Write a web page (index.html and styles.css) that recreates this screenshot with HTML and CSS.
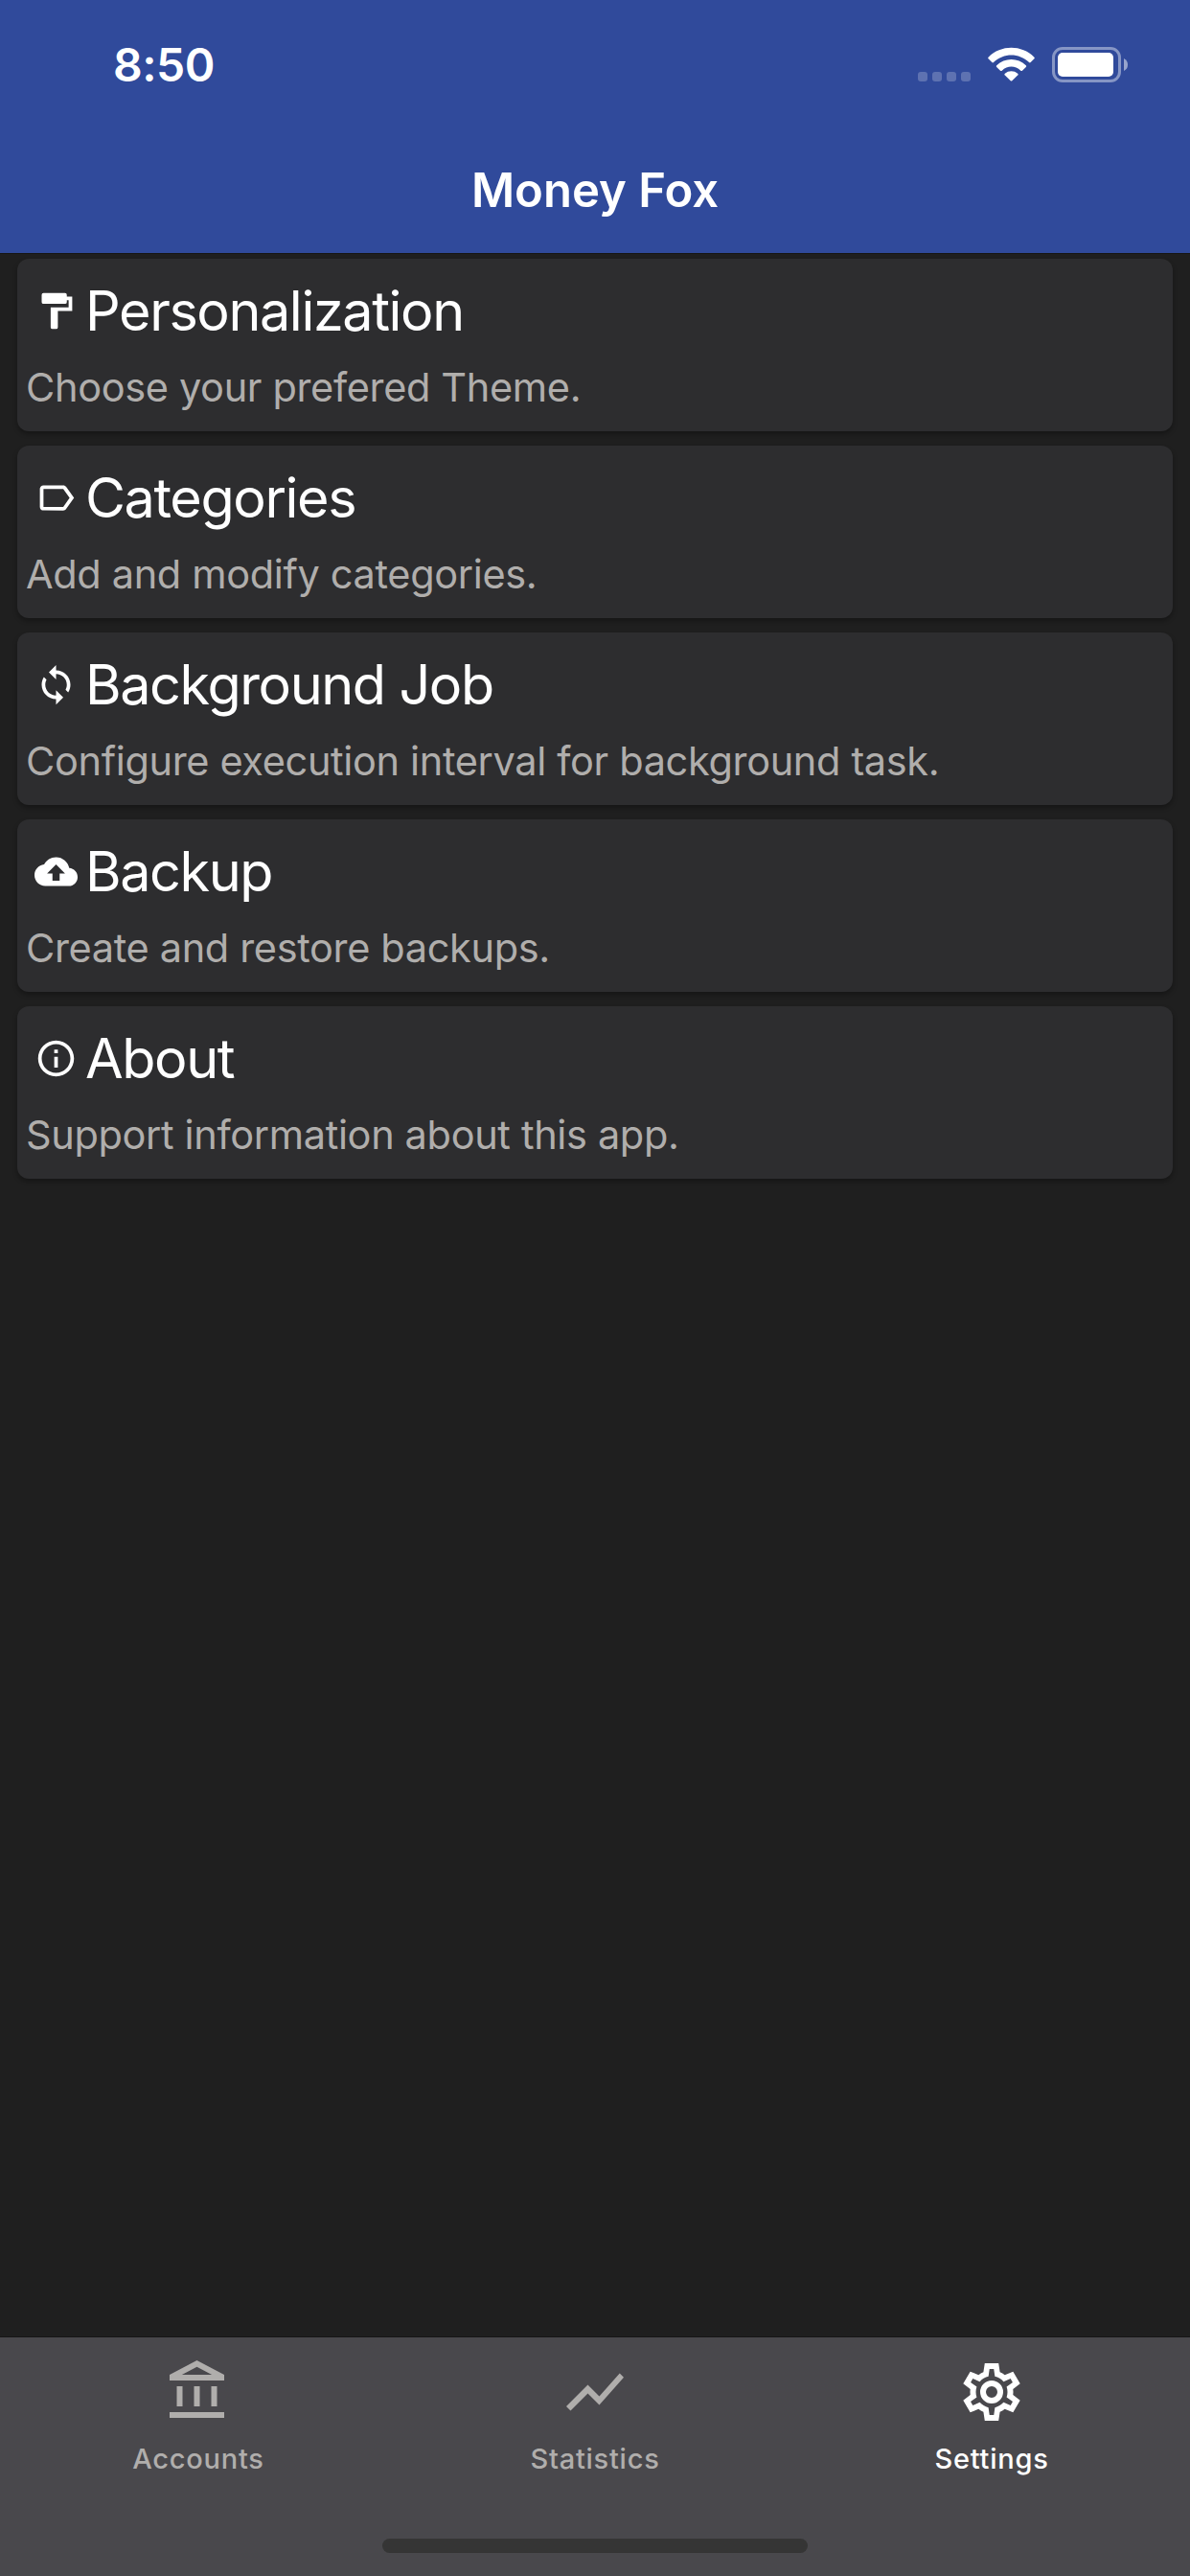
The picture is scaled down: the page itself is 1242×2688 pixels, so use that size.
FILE: index.html
```html
<!DOCTYPE html>
<html lang="en">
<head>
<meta charset="utf-8">
<title>Money Fox</title>
<link rel="stylesheet" href="styles.css">
</head>
<body>
<div class="app">
  <header class="header">
    <div class="status">
      <span class="time">8:50</span>
      <div class="indicators">
        <svg class="signal" viewBox="0 0 55 10"><rect width="10" height="10" rx="3"/><rect x="15" width="10" height="10" rx="3"/><rect x="30" width="10" height="10" rx="3"/><rect x="45" width="10" height="10" rx="3"/></svg>
        <svg class="wifi" viewBox="0 0 50 36"><path d="M.6 12.2a1.2 1.2 0 0 1 0-1.700C14-3 36-3 49.400 10.500a1.200 1.200 0 0 1 0 1.700L45.600 16a1.200 1.200 0 0 1-1.700 0C33 5.600 17 5.600 6.100 16a1.200 1.200 0 0 1-1.700 0ZM9.400 21a1.200 1.200 0 0 1 0-1.700C18 10.900 32 10.900 40.600 19.300a1.200 1.200 0 0 1 0 1.700L36.700 24.800a1.200 1.200 0 0 1-1.700 0C29 19.300 21 19.300 15 24.800a1.200 1.200 0 0 1-1.700 0ZM18.200 29.800a1.200 1.200 0 0 1 0-1.800C22 24.600 28 24.600 31.800 28a1.200 1.200 0 0 1 0 1.800L25.800 35.600a1.200 1.200 0 0 1-1.600 0Z"/></svg>
        <svg class="battery" viewBox="0 0 79 37"><rect class="shell" x="1.500" y="1.500" width="69" height="34" rx="9.500"/><rect x="6" y="6" width="58" height="25" rx="5"/><path class="tip" d="M75 12v13q4-2 4-6.500T75 12Z"/></svg>
      </div>
    </div>
    <h1 class="title">Money Fox</h1>
  </header>
  <main class="list">
    <section class="card">
      <div class="card-head">
        <svg class="card-icon" viewBox="0 0 24 24"><path d="M18,4V3A1,1 0 0,0 17,2H5A1,1 0 0,0 4,3V7A1,1 0 0,0 5,8H17A1,1 0 0,0 18,7V6H19V10H9V21A1,1 0 0,0 10,22H12A1,1 0 0,0 13,21V12H21V4H18Z"/></svg>
        <h2 class="card-title">Personalization</h2>
      </div>
      <p class="card-text">Choose your prefered Theme.</p>
    </section>
    <section class="card">
      <div class="card-head">
        <svg class="card-icon" viewBox="0 0 24 24"><path d="M17.63 5.84C17.27 5.33 16.67 5 16 5L5 5.010C3.900 5.010 3 5.900 3 7v10c0 1.100.900 1.990 2 1.990L16 19c.67 0 1.270-.33 1.630-.84L22 12l-4.370-6.160zM16 17H5V7h11l3.550 5L16 17z"/></svg>
        <h2 class="card-title">Categories</h2>
      </div>
      <p class="card-text">Add and modify categories.</p>
    </section>
    <section class="card">
      <div class="card-head">
        <svg class="card-icon" viewBox="0 0 24 24"><path d="M12 4V1L8 5l4 4V6c3.310 0 6 2.690 6 6 0 1.010-.25 1.970-.7 2.800l1.460 1.460C19.540 15.030 20 13.570 20 12c0-4.420-3.580-8-8-8zm0 14c-3.310 0-6-2.690-6-6 0-1.010.25-1.970.7-2.800L5.240 7.740C4.460 8.970 4 10.430 4 12c0 4.420 3.580 8 8 8v3l4-4-4-4v3z"/></svg>
        <h2 class="card-title">Background Job</h2>
      </div>
      <p class="card-text">Configure execution interval for background task.</p>
    </section>
    <section class="card">
      <div class="card-head">
        <svg class="card-icon" viewBox="0 0 24 24"><path d="M19.350 10.040C18.670 6.590 15.640 4 12 4 9.110 4 6.600 5.640 5.350 8.040 2.340 8.360 0 10.910 0 14c0 3.310 2.690 6 6 6h13c2.760 0 5-2.240 5-5 0-2.640-2.050-4.780-4.650-4.960zM14 13v4h-4v-4H7l5-5 5 5h-3z"/></svg>
        <h2 class="card-title">Backup</h2>
      </div>
      <p class="card-text">Create and restore backups.</p>
    </section>
    <section class="card">
      <div class="card-head">
        <svg class="card-icon" viewBox="0 0 24 24"><path d="M11 7h2v2h-2zm0 4h2v6h-2zm1-9C6.480 2 2 6.480 2 12s4.480 10 10 10 10-4.480 10-10S17.520 2 12 2zm0 18c-4.410 0-8-3.590-8-8s3.590-8 8-8 8 3.590 8 8-3.590 8-8 8z"/></svg>
        <h2 class="card-title">About</h2>
      </div>
      <p class="card-text">Support information about this app.</p>
    </section>
  </main>
  <footer class="footer">
    <nav class="tabs">
      <a class="tab">
        <svg class="tab-icon" viewBox="0 0 24 24"><path d="M6.500 10h-2v7h2v-7zm6 0h-2v7h2v-7zm8.500 9H2v2h19v-2zm-2.500-9h-2v7h2v-7zm-7-6.740L16.710 6H6.290l5.210-2.740m0-2.260L2 6v2h19V6l-9.500-5z"/></svg>
        <span class="tab-label">Accounts</span>
      </a>
      <a class="tab">
        <svg class="tab-icon" viewBox="0 0 24 24"><path d="M3.500 18.490l6-6.010 4 4L22 6.920l-1.410-1.410-7.090 7.970-4-4L2 16.990z"/></svg>
        <span class="tab-label">Statistics</span>
      </a>
      <a class="tab tab-active">
        <svg class="tab-icon" viewBox="0 0 24 24"><path d="M12,8A4,4 0 0,1 16,12A4,4 0 0,1 12,16A4,4 0 0,1 8,12A4,4 0 0,1 12,8M12,10A2,2 0 0,0 10,12A2,2 0 0,0 12,14A2,2 0 0,0 14,12A2,2 0 0,0 12,10M9.6,22L9.13,18.93C8.5,18.68 7.96,18.34 7.44,17.94L4.55,19.1L2.1,14.9L4.57,12.97L4.5,12L4.57,11L2.1,9.1L4.55,4.9L7.44,6.05C7.96,5.66 8.5,5.32 9.13,5.07L9.6,2H14.4L14.87,5.07C15.5,5.32 16.04,5.66 16.56,6.05L19.45,4.9L21.9,9.1L19.43,11L19.5,12L19.43,13L21.9,14.9L19.45,19.1L16.56,17.95C16.04,18.34 15.5,18.68 14.87,18.93L14.4,22H9.6M11.25,4L10.88,6.61C9.68,6.86 8.62,7.5 7.85,8.39L5.44,7.35L4.69,8.65L6.8,10.2C6.4,11.37 6.4,12.64 6.8,13.8L4.68,15.36L5.43,16.66L7.86,15.62C8.63,16.5 9.68,17.14 10.87,17.38L11.24,20H12.76L13.13,17.39C14.32,17.14 15.37,16.5 16.14,15.62L18.57,16.66L19.32,15.36L17.2,13.81C17.6,12.64 17.6,11.37 17.2,10.2L19.31,8.65L18.56,7.35L16.15,8.39C15.38,7.5 14.32,6.86 13.12,6.62L12.75,4H11.25Z"/></svg>
        <span class="tab-label">Settings</span>
      </a>
    </nav>
    <div class="home-bar"></div>
  </footer>
</div>
</body>
</html>
```
FILE: styles.css
```css
* { box-sizing: border-box; margin: 0; padding: 0; }
body {
  background: #1f1f1f;
  color: #fff;
  font-family: Inter, "Liberation Sans", sans-serif;
}
svg { display: block; fill: currentColor; flex: none; }
.app { display: flex; flex-direction: column; width: 1242px; height: 2688px; }

.header { height: 264px; background: #304a9b; box-shadow: 0 1px #161616; }
.status {
  display: flex;
  justify-content: space-between;
  height: 132px;
  padding: 38px 65px 0 118px;
}
.time { font-size: 48px; font-weight: 600; line-height: 60px; letter-spacing: -0.5px; }
.indicators { display: flex; align-items: flex-start; padding-top: 11px; }
.signal { width: 55px; height: 10px; margin: 26px 18px 0 0; opacity: .22; }
.wifi { width: 49px; height: 36px; margin-right: 18px; }
.battery { width: 79px; height: 37px; }
.shell { fill: none; stroke: #fff; stroke-width: 3; opacity: .42; }
.tip { opacity: .5; }
.title { font-size: 49px; font-weight: 600; line-height: 134px; text-align: center; }

.list { flex: 1; display: flex; flex-direction: column; gap: 15px; padding: 6px 18px; }
.card {
  height: 180px;
  padding: 23px 10px 0 9px;
  border-radius: 12px;
  background: #2d2d2f;
  box-shadow: 0 3px 5px rgba(0, 0, 0, .3);
}
.card-head { display: flex; align-items: center; height: 62px; padding-left: 9px; }
.card-icon { width: 45px; height: 45px; margin-right: 8px; }
.card-title { font-size: 57.500px; font-weight: 400; line-height: 62px; letter-spacing: -1.400px; white-space: nowrap; }
.card-text { margin-top: 22px; font-size: 41.500px; line-height: 54px; letter-spacing: -.350px; color: #b0aeac; white-space: nowrap; }

.footer { height: 249px; background: #49484c; box-shadow: 0 -1px #161616; }
.tabs { display: flex; justify-content: space-between; height: 210px; padding: 21px 0 0; }
.tab { width: 414px; display: flex; flex-direction: column; align-items: center; color: #b0aeac; }
.tab-active { color: #fff; }
.tab-icon { width: 72px; height: 72px; }
.tab-label { margin-top: 15px; font-size: 29px; font-weight: 500; line-height: 38px; letter-spacing: .750px; }
.home-bar { width: 444px; height: 15px; margin: 0 auto; border-radius: 8px; background: #353535; }
```
